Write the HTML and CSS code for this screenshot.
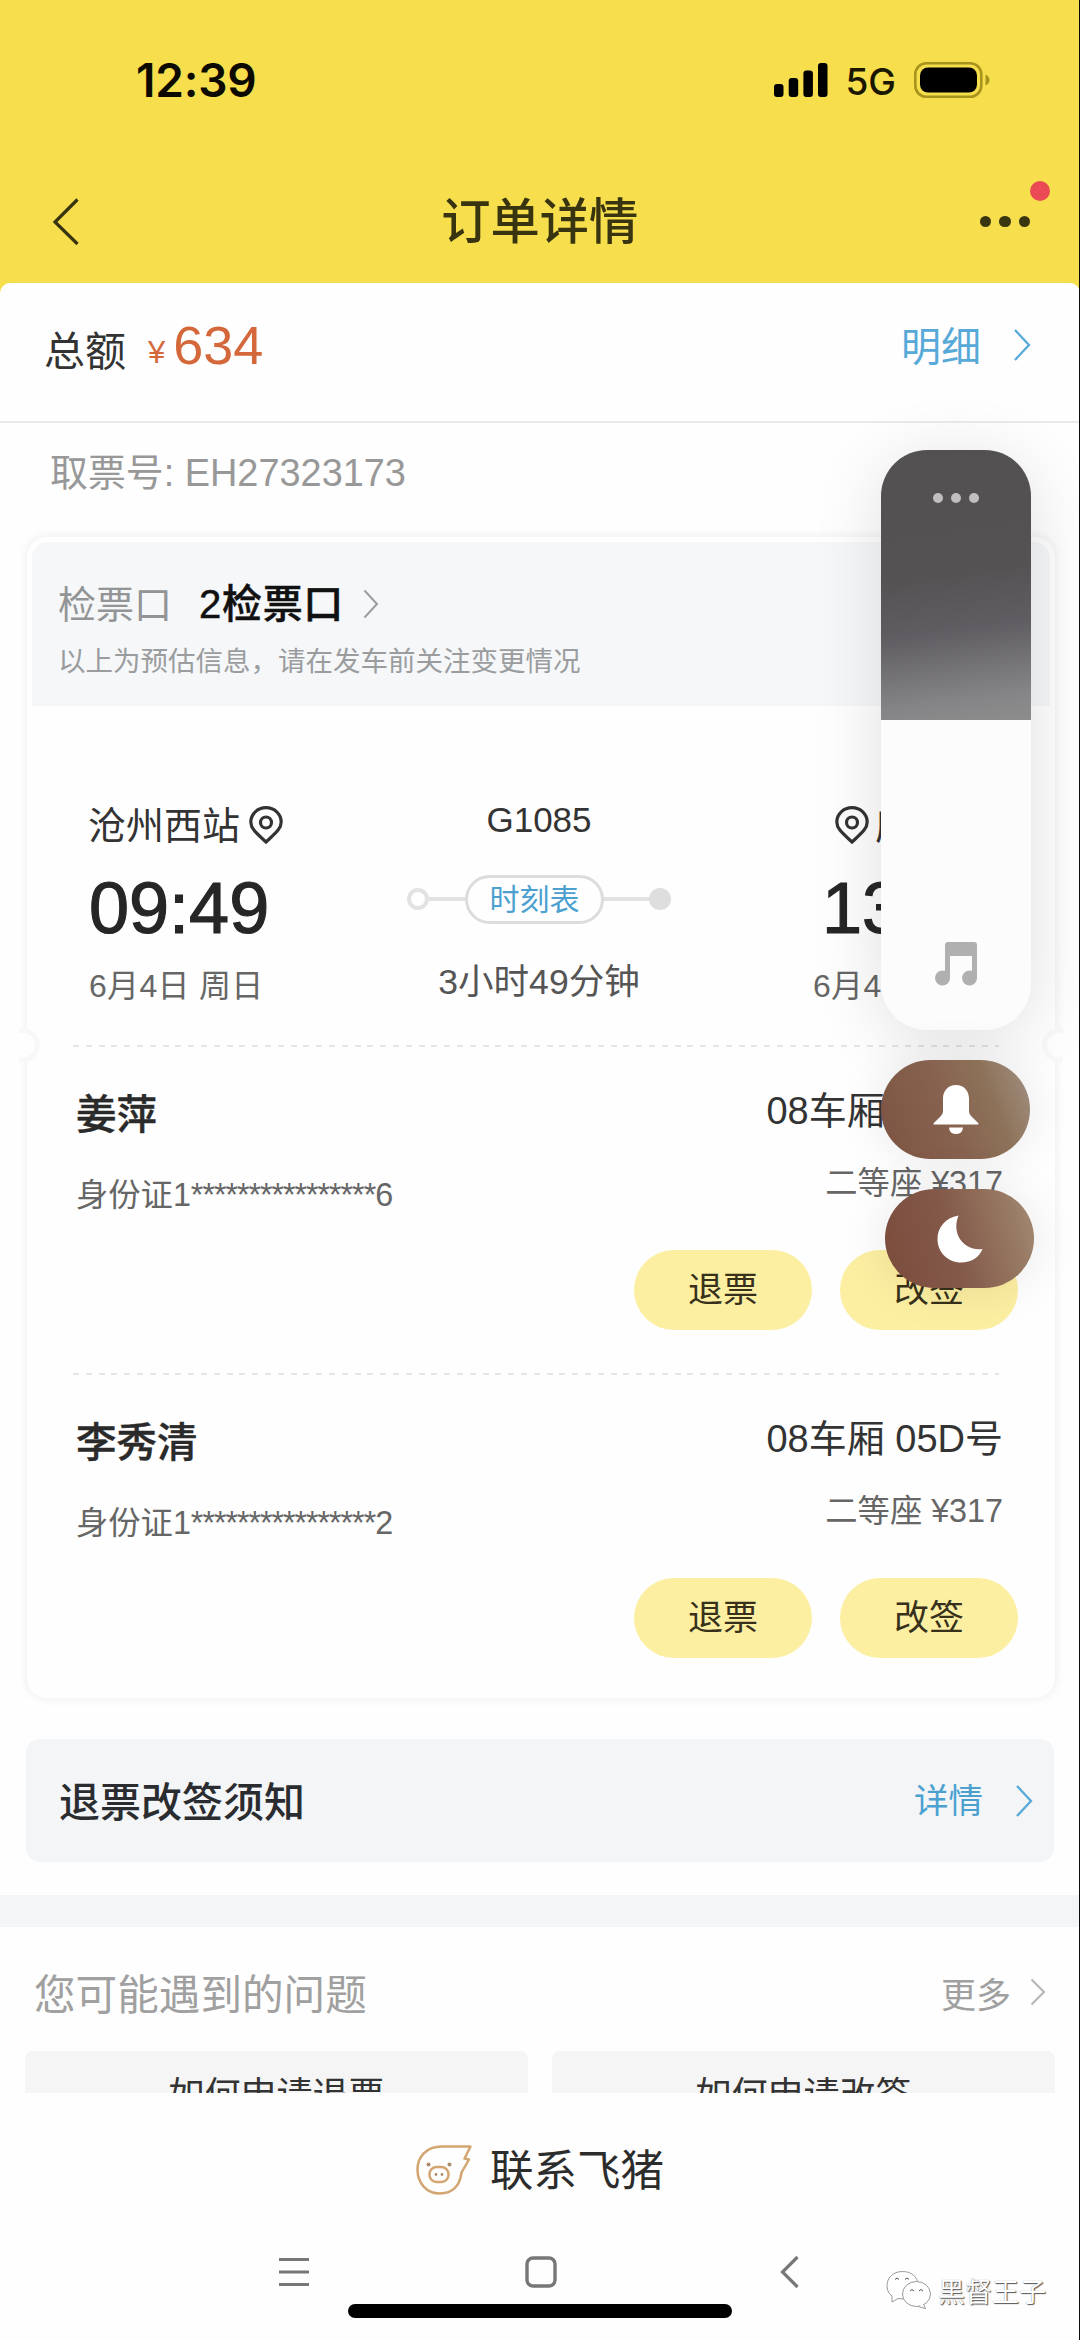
FILE: index.html
```html
<!DOCTYPE html>
<html lang="zh-CN">
<head>
<meta charset="utf-8">
<title>订单详情</title>
<link rel="stylesheet" href="styles.css">
</head>
<body>
<div class="screen">
  <div class="top">
    <div class="status">
      <span class="clock">12:39</span>
      <div class="status-icons">
        <svg class="signal" width="54" height="34" viewBox="0 0 54 34"><rect x="0" y="21" width="9.5" height="13" rx="3"/><rect x="14.7" y="15" width="9.5" height="19" rx="3"/><rect x="29.4" y="7.500" width="9.500" height="26.500" rx="3"/><rect x="44" y="0" width="9.500" height="34" rx="3"/></svg>
        <span class="net">5G</span>
        <svg class="battery" width="76" height="36" viewBox="0 0 76 36"><rect x="1.300" y="1.300" width="66" height="33.400" rx="11" fill="none" stroke="#a8931c" stroke-width="2.600"/><rect x="6" y="5.500" width="57" height="25" rx="8"/><path d="M71.500 12.500q4 2 4 5.500t-4 5.500z" fill="#a8931c"/></svg>
      </div>
    </div>
    <div class="nav">
      <svg width="28" height="50" viewBox="0 0 28 50"><path d="M25.500 2.500L3 25l22.500 22" fill="none" stroke="#38340f" stroke-width="3.200"/></svg>
      <h1>订单详情</h1>
      <div class="more"><i></i><i></i><i></i><b class="badge"></b></div>
    </div>
  </div>

  <main class="sheet">
    <div class="total">
      <span class="total-label">总额</span><span class="yen">¥</span><span class="amount">634</span>
      <span class="link">明细</span>
      <svg class="chev-total" width="18" height="34" viewBox="0 0 18 34"><path d="M2 2l14 15L2 32" fill="none" stroke="#57a9d8" stroke-width="2.300"/></svg>
    </div>
    <div class="pickup">取票号: EH27323173</div>

    <section class="card">
      <div class="gate">
        <div class="gate-row"><span class="gate-label">检票口</span><span class="gate-name">2检票口</span>
          <svg width="16" height="30" viewBox="0 0 16 30"><path d="M1.500 1.500L14 15 1.500 28.500" fill="none" stroke="#9a9c9e" stroke-width="2"/></svg></div>
        <p>以上为预估信息，请在发车前关注变更情况</p>
      </div>
      <div class="trip">
        <div class="stop">
          <div class="station"><span>沧州西站</span><svg class="pin" width="34" height="38" viewBox="0 0 34 38"><path d="M17 36C8 27.500 1.800 23 1.800 16A15.200 14.300 0 0 1 32.200 16C32.200 23 26 27.500 17 36z"/><circle cx="17" cy="16.500" r="5.500"/></svg></div>
          <div class="time">09:49</div>
          <div class="date">6月4日 周日</div>
        </div>
        <div class="middle">
          <div class="train">G1085</div>
          <div class="line"><i class="ring"></i><i class="bar"></i><span class="pill">时刻表</span><i class="bar long"></i><i class="disc"></i></div>
          <div class="duration">3小时49分钟</div>
        </div>
        <div class="stop arrive">
          <div class="station"><svg class="pin" width="34" height="38" viewBox="0 0 34 38"><path d="M17 36C8 27.500 1.800 23 1.800 16A15.200 14.300 0 0 1 32.200 16C32.200 23 26 27.500 17 36z"/><circle cx="17" cy="16.500" r="5.500"/></svg><span>庐山站</span></div>
          <div class="time">13:38</div>
          <div class="date">6月4日 周日</div>
        </div>
        <i class="notch left"></i><i class="notch right"></i>
      </div>
      <div class="passenger">
        <div class="pair"><b>姜萍</b><span class="seat">08车厢 05C号</span></div>
        <div class="pair sub"><span>身份证1<span class="mask">****************</span>6</span><span class="price">二等座 ¥317</span></div>
        <div class="actions"><span>退票</span><span>改签</span></div>
      </div>
      <div class="passenger">
        <div class="pair"><b>李秀清</b><span class="seat">08车厢 05D号</span></div>
        <div class="pair sub"><span>身份证1<span class="mask">****************</span>2</span><span class="price">二等座 ¥317</span></div>
        <div class="actions"><span>退票</span><span>改签</span></div>
      </div>
    </section>

    <div class="notice">
      <b>退票改签须知</b><span>详情</span>
      <svg width="18" height="34" viewBox="0 0 18 34"><path d="M2 2l14 15L2 32" fill="none" stroke="#57a9d8" stroke-width="2.300"/></svg>
    </div>
    <div class="band"></div>
    <div class="faq-head"><span>您可能遇到的问题</span><span class="faq-more">更多</span>
      <svg width="16" height="28" viewBox="0 0 16 28"><path d="M1.500 1.500L14 14 1.500 26.500" fill="none" stroke="#b5b5b5" stroke-width="2"/></svg></div>
    <div class="faq"><span>如何申请退票</span><span>如何申请改签</span></div>
  </main>

  <footer>
    <div class="contact">
      <svg width="56" height="50" viewBox="0 0 56 50" fill="none" stroke="#d3a570" stroke-width="2.500" stroke-linejoin="round"><path d="M54.500 1.500H26C10 1.500 1.500 12 1.500 24.500 1.500 38 10.500 48.500 24 48.500 37 48.500 44 40 45.500 27.500L53 14.500 48.500 13.500z"/><rect x="13.500" y="22" width="19" height="15" rx="7"/><g fill="#a98d6c" stroke="none"><circle cx="12.500" cy="19.500" r="2"/><circle cx="33.500" cy="19.500" r="2"/><circle cx="20" cy="29.500" r="1.400"/><circle cx="26" cy="29.500" r="1.400"/></g></svg>
      <span>联系飞猪</span>
    </div>
    <div class="sysnav">
      <svg width="32" height="30" viewBox="0 0 32 30"><path d="M1 2.500h30M1 15h30M1 27.500h30" stroke="#777" stroke-width="3.200"/></svg>
      <svg class="home" width="32" height="32" viewBox="0 0 32 32"><rect x="2" y="2" width="28" height="28" rx="6" fill="none" stroke="#777" stroke-width="3.400"/></svg>
      <svg width="20" height="34" viewBox="0 0 20 34"><path d="M17.500 2L2.500 17l15 15" fill="none" stroke="#777" stroke-width="3.200"/></svg>
    </div>
    <div class="homebar"></div>
    <div class="watermark">
      <svg width="46" height="40" viewBox="0 0 46 40" fill="#fff" stroke="#999" stroke-width="1"><path d="M16.500 1.500C7 1.500 1 8 1 15.500c0 5 2 8.500 5 10.500l0 6 6-3.500c11 2 20-4 20-13S25 1.500 16.500 1.500z"/><ellipse cx="30.500" cy="24" rx="14" ry="12.500"/><path d="M32 36.400l7.500 2.200-2-4.500" /><path d="M9 9.500q2-3 4 0M19 9.500q2-3 4 0M24 21q2-3 4 0M33 21q2-3 4 0" fill="none" stroke="#555"/></svg>
      <span>黑督王子</span>
    </div>
  </footer>

  <div class="volume">
    <div class="volume-rest"><i></i><i></i><i></i></div>
    <svg width="44" height="44" viewBox="0 0 44 44" fill="#b0b0b0"><path d="M11 3a3 3 0 0 1 3-3h26a3 3 0 0 1 3 3v34h-5V14H16v23h-5z"/><circle cx="8.500" cy="36" r="7.500"/><circle cx="35.500" cy="36" r="7.500"/></svg>
  </div>
  <div class="toggle bell"><svg width="46" height="50" viewBox="0 0 46 50" fill="#fff"><path d="M23 0c-8 0-13 6-13 13.500V26c0 3-1.500 4.500-4 7L.8 38c-.8 1 0 1.500 1 1.500h42.400c1 0 1.800-.5 1-1.500L40 33c-2.500-2.500-4-4-4-7V13.500C36 6 31 0 23 0zM16 42.500h14C29.500 47 27 49 23 49s-6.500-2-7-6.500z"/></svg></div>
  <div class="toggle moon"><svg width="46" height="48" viewBox="0 0 46 48" fill="#fff"><path d="M21.500.5C8 3 .5 12.500.5 24 .5 37.500 11 47.500 24 47.500c10.500 0 18-5 21.500-13.500-5 .8-12-.2-17.500-4.500C19.500 23 17 11.500 21.500.5z"/></svg></div>
  <div class="edge"></div>
</div>
</body>
</html>
```
FILE: styles.css
```css
* { box-sizing: border-box; }
body { margin: 0; font-family: "Liberation Sans", "Noto Sans CJK SC", sans-serif; color: #333; }
h1, p { margin: 0; font-weight: 400; }
i, b { font-style: normal; display: block; }
svg { display: block; flex: none; }
.screen { position: relative; width: 1080px; height: 2340px; overflow: hidden; background: #fefefe; display: flex; flex-direction: column; }

.top { height: 295px; background: #f7de4d; flex: none; }
.status { height: 160px; display: flex; justify-content: space-between; align-items: center; padding: 0 90px 0 136px; }
.clock { font: 600 46px/60px Inter, sans-serif; color: #0c0a00; letter-spacing: -.2px; }
.status-icons { display: flex; align-items: center; }
.net { font: 500 37px/50px Inter, sans-serif; color: #1a1600; margin: 3px 18px 0 17px; }
.nav { height: 123px; display: flex; justify-content: space-between; align-items: center; padding: 0 50px 0 52px; }
.nav h1 { font-size: 49.300px; line-height: 60px; font-weight: 500; color: #38340f; padding-left: 20px; }
.more { position: relative; display: flex; gap: 8px; }
.more i { width: 11.500px; height: 11.500px; border-radius: 50%; background: #3a3610; }
.badge { position: absolute; width: 20px; height: 20px; border-radius: 50%; background: #ea4a54; left: 50px; top: -35px; }

.sheet { margin-top: -12px; height: 1810px; overflow: hidden; background: #fefefe; border-radius: 10px 10px 0 0; flex: none; }
.total { height: 140px; border-bottom: 2px solid #eaeaea; display: flex; align-items: center; padding: 0 49px 14px 44px; }
.total-label { font-size: 41px; margin-top: 6px; }
.yen { font-size: 31px; color: #d4683a; margin: 15px 0 0 22px; }
.amount { font-size: 54px; color: #d4683a; margin-left: 8px; }
.link { margin-left: auto; font-size: 40px; color: #57a9d8; margin-top: -3px; }
.chev-total { margin-left: 32px; }
.pickup { height: 100px; line-height: 100px; padding-left: 50px; font-size: 37.900px; color: #989898; }

.card { margin: 14px 25px 0 27px; height: 1161px; padding: 5px 5px 0; border-radius: 20px; background: #fefefe; box-shadow: 0 0 9px 2px rgba(0,0,0,.055); }
.gate { height: 164px; background: #f5f7f9; border-radius: 16px 16px 0 0; padding: 33px 0 0 26px; }
.gate-row { display: flex; align-items: center; height: 57px; }
.gate-row span { margin-top: -5px; }
.gate-label { font-size: 38px; color: #929496; }
.gate-name { font-size: 40px; font-weight: 500; color: #111; padding-left: 27px; letter-spacing: .7px; -webkit-text-stroke: .5px #111; }
.gate-row svg { margin-left: 19px; }
.gate p { font-size: 27.500px; line-height: 60px; color: #9a9c9e; }
.trip { position: relative; height: 339px; display: flex; justify-content: space-between; padding: 95px 46px 0 57px; }
.station { height: 48px; display: flex; align-items: center; font-size: 38px; gap: 9px; }
.station span { margin: -5px 0 0 -1px; }
.pin { fill: none; stroke: #333; stroke-width: 3.200; }
.time { font-size: 72px; line-height: 118px; color: #262626; -webkit-text-stroke: 1.200px #262626; }
.date { font-size: 32px; line-height: 38px; color: #666; white-space: nowrap; letter-spacing: .3px; }
.middle { margin-top: -5px; display: flex; flex-direction: column; align-items: center; margin-left: -18px; }
.train { font-size: 35px; line-height: 48px; }
.line { height: 110px; display: flex; align-items: center; }
.ring { width: 22px; height: 22px; border: 4px solid #e2e2e2; border-radius: 50%; }
.bar { width: 36px; height: 4px; background: #e2e2e2; }
.bar.long { width: 45px; }
.disc { width: 22px; height: 22px; border-radius: 50%; background: #dedede; }
.pill { width: 139px; height: 49px; border: 3px solid #dcdcdc; border-radius: 25px; font-size: 30px; line-height: 43px; text-align: center; color: #4ba0d0; }
.duration { font-size: 35.600px; line-height: 56px; color: #555; }
.arrive { width: 191px; }
.arrive .station { padding-left: 22px; gap: 7px; }
.arrive .time { padding-left: 9px; }
.notch { position: absolute; width: 21px; height: 34px; bottom: -17px; background: #fefefe; border: 5px solid #f8f8f8; }
.notch.left { left: -13px; border-left: 0; border-radius: 0 17px 17px 0; }
.notch.right { right: -13px; border-right: 0; border-radius: 17px 0 0 17px; }

.passenger { height: 328px; margin: 0 20px 0 41px; padding: 39px 27px 0 3px; background: repeating-linear-gradient(90deg, #e6e6e6 0 6px, transparent 6px 12.800px) 0 0 / 926px 2px no-repeat; }
.pair { display: flex; justify-content: space-between; height: 60px; line-height: 60px; font-size: 38px; }
.pair b { font-size: 40.500px; line-height: 63px; font-weight: 500; color: #2a2a2a; -webkit-text-stroke: .4px #2a2a2a; }
.seat { line-height: 54px; }
.pair.sub { font-size: 32.300px; color: #666; margin-top: 21px; }
.pair .price { line-height: 36px; }
.mask { letter-spacing: -1.050px; }
.actions { display: flex; justify-content: flex-end; gap: 28px; margin: 25px -15px 0 0; }
.actions span { width: 178px; height: 80px; border-radius: 40px; background: #fcefa2; text-align: center; line-height: 80px; font-size: 35px; color: #37301a; }

.notice { margin: 41px 26px 0; height: 123px; border-radius: 14px; background: #f3f5f7; display: flex; align-items: center; padding: 0 21px 0 33px; }
.notice b { font-size: 41px; margin-top: -4px; font-weight: 500; color: #2a2c30; }
.notice span { margin: -5px 32px 0 auto; font-size: 34.500px; color: #4ba0d0; }
.band { margin-top: 33px; height: 32px; background: #f3f5f7; }
.faq-head { height: 124px; display: flex; align-items: center; padding: 6px 34px 0; font-size: 41.600px; color: #a0a0a0; }
.faq-more { margin-left: auto; margin-right: 19px; font-size: 35px; }
.faq { display: grid; grid-template-columns: 1fr 1fr; gap: 24px; margin: 0 25px; }
.faq span { height: 90px; line-height: 90px; border-radius: 8px; background: #f5f5f5; text-align: center; font-size: 36px; }

footer { position: relative; flex: 1; background: #fefefe; }
.contact { display: flex; justify-content: center; align-items: center; gap: 18px; height: 154px; font-size: 43.500px; color: #2c2c2c; }
.contact span { margin-top: -5px; }
.sysnav { display: flex; align-items: center; justify-content: space-between; height: 50px; padding: 0 280px 0 278px; }
.home { margin-right: 9px; }
.homebar { width: 384px; height: 14px; border-radius: 7px; background: #000; margin: 7px auto 0; }
.watermark { position: absolute; left: 886px; top: 177px; display: flex; align-items: center; gap: 6px; font-size: 27px; color: #fff; text-shadow: 1px 1px 1px #555, 0 0 1px #888; }

.volume { position: absolute; left: 881px; top: 450px; width: 150px; height: 580px; border-radius: 46px; overflow: hidden; background: #fcfcfc; display: flex; flex-direction: column; align-items: center; justify-content: space-between; padding-bottom: 44px; box-shadow: 0 10px 70px rgba(0,0,0,.12); }
.volume-rest { width: 150px; height: 270px; background: linear-gradient(172deg, #525051 0, #555254 45%, #5f5d61 65%, #858486 90%, #8e8d8e 100%); display: flex; justify-content: center; gap: 8px; padding-top: 43px; }
.volume-rest i { width: 10px; height: 10px; border-radius: 50%; background: #c2bec0; }
.toggle { position: absolute; width: 149px; height: 99px; border-radius: 50px; display: flex; align-items: center; justify-content: center; box-shadow: 0 0 50px rgba(0,0,0,.09); }
.bell { left: 881px; top: 1060px; background: linear-gradient(70deg, #7d5342 0, #87624f 45%, #8d7259 72%, #a29183 100%); }
.moon { left: 885px; top: 1189px; background: linear-gradient(75deg, #7b4b3b 0, #83594a 45%, #957660 78%, #a58b74 100%); }
.edge { position: absolute; right: 0; top: 0; width: 1px; height: 2340px; background: #0c0c0c; }
```
